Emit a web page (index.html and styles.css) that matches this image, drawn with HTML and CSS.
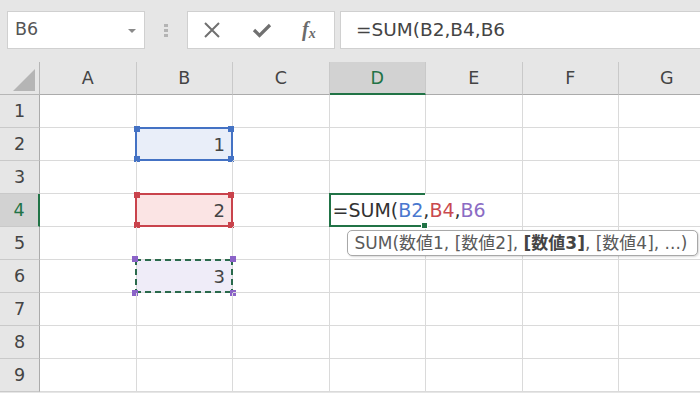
FILE: index.html
```html
<!DOCTYPE html>
<html lang="ja">
<head>
<meta charset="utf-8">
<link rel="stylesheet" href="styles.css">
</head>
<body>
<div class="toolbar">
  <div class="namebox">
    <span class="name">B6</span>
    <span class="caret"></span>
  </div>
  <div class="grip"><i></i><i></i><i></i></div>
  <div class="fbuttons">
    <svg class="ico x" width="18" height="18" viewBox="0 0 18 18"><path d="M2 2 L16 16 M16 2 L2 16" stroke="#707070" stroke-width="2" fill="none"/></svg>
    <svg class="ico ok" width="20" height="16" viewBox="0 0 20 16"><path d="M2 8 L7.5 13.5 L18 3" stroke="#707070" stroke-width="3.2" fill="none"/></svg>
    <span class="fx">f<sub>x</sub></span>
  </div>
  <div class="fbar">=SUM(B2,B4,B6</div>
</div>
<div class="sheet">
  <div class="corner"><span class="tri"></span></div>
  <div class="ch">A</div><div class="ch">B</div><div class="ch">C</div><div class="ch sel">D</div><div class="ch">E</div><div class="ch">F</div><div class="ch">G</div>

  <div class="rh">1</div><div class="c"></div><div class="c"></div><div class="c"></div><div class="c"></div><div class="c"></div><div class="c"></div><div class="c"></div>

  <div class="rh">2</div><div class="c"></div>
  <div class="c ref blue"><span class="v">1</span><span class="box"><i class="h tl"></i><i class="h tr"></i><i class="h bl"></i><i class="h br"></i></span></div>
  <div class="c"></div><div class="c"></div><div class="c"></div><div class="c"></div><div class="c"></div>

  <div class="rh">3</div><div class="c"></div><div class="c"></div><div class="c"></div><div class="c"></div><div class="c"></div><div class="c"></div><div class="c"></div>

  <div class="rh sel">4</div><div class="c"></div>
  <div class="c ref red"><span class="v">2</span><span class="box"><i class="h tl"></i><i class="h tr"></i><i class="h bl"></i><i class="h br"></i></span></div>
  <div class="c"></div>
  <div class="c active">
    <div class="editor"><span class="k">=SUM(</span><span class="b2">B2</span><span class="k">,</span><span class="b4">B4</span><span class="k">,</span><span class="b6">B6</span></div>
    <div class="frame"><i class="fill"></i></div>
    <div class="tip">SUM(数値1, [数値2], <b>[数値3]</b>, [数値4], ...)</div>
  </div>
  <div class="c"></div><div class="c"></div><div class="c"></div>

  <div class="rh">5</div><div class="c"></div><div class="c"></div><div class="c"></div><div class="c"></div><div class="c"></div><div class="c"></div><div class="c"></div>

  <div class="rh">6</div><div class="c"></div>
  <div class="c ref purple"><span class="v">3</span><span class="box"><i class="h tl"></i><i class="h tr"></i><i class="h bl"></i><i class="h br"></i></span></div>
  <div class="c"></div><div class="c"></div><div class="c"></div><div class="c"></div><div class="c"></div>

  <div class="rh">7</div><div class="c"></div><div class="c"></div><div class="c"></div><div class="c"></div><div class="c"></div><div class="c"></div><div class="c"></div>
  <div class="rh">8</div><div class="c"></div><div class="c"></div><div class="c"></div><div class="c"></div><div class="c"></div><div class="c"></div><div class="c"></div>
  <div class="rh">9</div><div class="c"></div><div class="c"></div><div class="c"></div><div class="c"></div><div class="c"></div><div class="c"></div><div class="c"></div>
</div>
</body>
</html>
```

FILE: styles.css
```css
* { box-sizing: border-box; }
html, body { margin: 0; padding: 0; }
body {
  width: 700px;
  height: 393px;
  overflow: hidden;
  background: #e6e6e6;
  font-family: "DejaVu Sans", "Noto Sans CJK JP", sans-serif;
  color: #444;
}
.toolbar {
  height: 62px;
  display: flex;
  align-items: flex-start;
  padding: 11px 0 0 7px;
}
.namebox {
  width: 138px;
  height: 38px;
  background: #fff;
  border: 1px solid #d0d0d0;
  display: flex;
  align-items: center;
  justify-content: space-between;
  padding: 0 8px 0 7px;
}
.name { font-size: 17.5px; color: #555; line-height: 1; }
.caret {
  width: 0; height: 0;
  border-left: 4px solid transparent;
  border-right: 4px solid transparent;
  border-top: 4px solid #8a8a8a;
  margin-top: 1px;
}
.grip {
  width: 42px;
  height: 38px;
  display: flex;
  flex-direction: column;
  align-items: center;
  justify-content: center;
  gap: 2px;
}
.grip i { display: block; width: 4px; height: 3px; background: #b4b4b4; }
.fbuttons {
  width: 148px;
  height: 38px;
  background: #fff;
  border: 1px solid #d0d0d0;
  display: flex;
  align-items: center;
  padding: 0 0 0 15px;
}
.ico { display: block; }
.ok { margin-left: 31px; }
.fx {
  margin-left: 30px;
  font-family: "Liberation Serif", "DejaVu Serif", serif;
  font-style: italic;
  font-weight: bold;
  font-size: 20px;
  color: #6b6b6b;
  line-height: 1;
}
.fx sub { font-size: 14px; vertical-align: -2px; }
.fbar {
  margin-left: 5px;
  flex: 1;
  height: 38px;
  background: #fff;
  border: 1px solid #d0d0d0;
  border-right: none;
  font-size: 18.5px;
  color: #444;
  padding-left: 15px;
  line-height: 36px;
}
.sheet {
  display: grid;
  grid-template-columns: 40px repeat(7, 96.5px);
  grid-template-rows: repeat(10, 33px);
  background: #fff;
  width: 715.5px;
}
.corner {
  background: #e6e6e6;
  border-right: 1px solid #b6b6b6;
  border-bottom: 1px solid #b6b6b6;
  position: relative;
}
.tri {
  position: absolute;
  right: 4px;
  bottom: 3px;
  width: 0; height: 0;
  border-left: 22px solid transparent;
  border-bottom: 22px solid #b5b5b5;
}
.ch {
  background: #e6e6e6;
  border-right: 1px solid #c9c9c9;
  border-bottom: 1px solid #ababab;
  display: flex;
  align-items: center;
  justify-content: center;
  font-size: 17.5px;
  color: #444;
}
.ch.sel {
  background: #d2d2d2;
  border-bottom: 2px solid #217346;
  color: #217346;
}
.rh {
  background: #e6e6e6;
  border-right: 1px solid #ababab;
  border-bottom: 1px solid #c9c9c9;
  display: flex;
  align-items: center;
  justify-content: center;
  font-size: 17.5px;
  color: #444;
}
.rh.sel {
  background: #d2d2d2;
  border-right: 2px solid #217346;
  color: #217346;
}
.c {
  border-right: 1px solid #dadada;
  border-bottom: 1px solid #dadada;
  position: relative;
}
.ref {
  display: flex;
  align-items: center;
  justify-content: flex-end;
  padding-right: 7px;
  font-size: 18px;
  color: #444;
}
.blue { background: #e9eef9; }
.red { background: #fbe4e4; }
.purple { background: #efecf8; }
.box {
  position: absolute;
  left: -2px; top: -1px; right: -1px; bottom: -1px;
  border: 2px solid;
}
.blue .box { border-color: #4472c4; }
.red .box { border-color: #c9434c; }
.purple .box {
  border: none;
  background:
    repeating-linear-gradient(90deg, #2a6a4c 0 6px, transparent 6px 10px) top left / 100% 2px no-repeat,
    repeating-linear-gradient(90deg, #2a6a4c 0 6px, transparent 6px 10px) bottom left / 100% 2px no-repeat,
    repeating-linear-gradient(180deg, #2a6a4c 0 6px, transparent 6px 10px) top left / 2px 100% no-repeat,
    repeating-linear-gradient(180deg, #2a6a4c 0 6px, transparent 6px 10px) top right / 2px 100% no-repeat;
}
.h {
  position: absolute;
  width: 6px; height: 6px;
}
.blue .h { background: #4472c4; }
.red .h { background: #c9434c; }
.purple .h { background: #8b63c8; }
.tl { left: -3px; top: -3px; }
.tr { right: -3px; top: -3px; }
.bl { left: -3px; bottom: -3px; }
.br { right: -3px; bottom: -3px; }
.active { z-index: 2; }
.editor {
  position: absolute;
  left: 0; top: 0; bottom: 0;
  width: 165px;
  background: #fff;
  font-size: 19px;
  line-height: 32px;
  padding-left: 3px;
  white-space: nowrap;
}
.frame {
  position: absolute;
  left: -1px; top: -1px; bottom: -1px; right: 0;
  border: 2px solid #217346;
  border-right: none;
}
.k { color: #333; }
.b2 { color: #4a78cf; }
.b4 { color: #c94a4f; }
.b6 { color: #8b6cc4; }
.fill {
  position: absolute;
  right: -3px; bottom: -4px;
  width: 5px; height: 5px;
  background: #217346;
  border: 1px solid #fff;
  box-sizing: content-box;
}
.tip {
  position: absolute;
  left: 17px;
  top: 36px;
  width: 351px;
  height: 26px;
  background: #fff;
  border: 1px solid #a8a8a8;
  border-radius: 5px;
  box-shadow: 1px 1px 2px rgba(0,0,0,0.15);
  font-size: 17px;
  line-height: 24px;
  color: #5a5a5a;
  padding-left: 7px;
  white-space: nowrap;
}
.tip b { color: #444; }
```
